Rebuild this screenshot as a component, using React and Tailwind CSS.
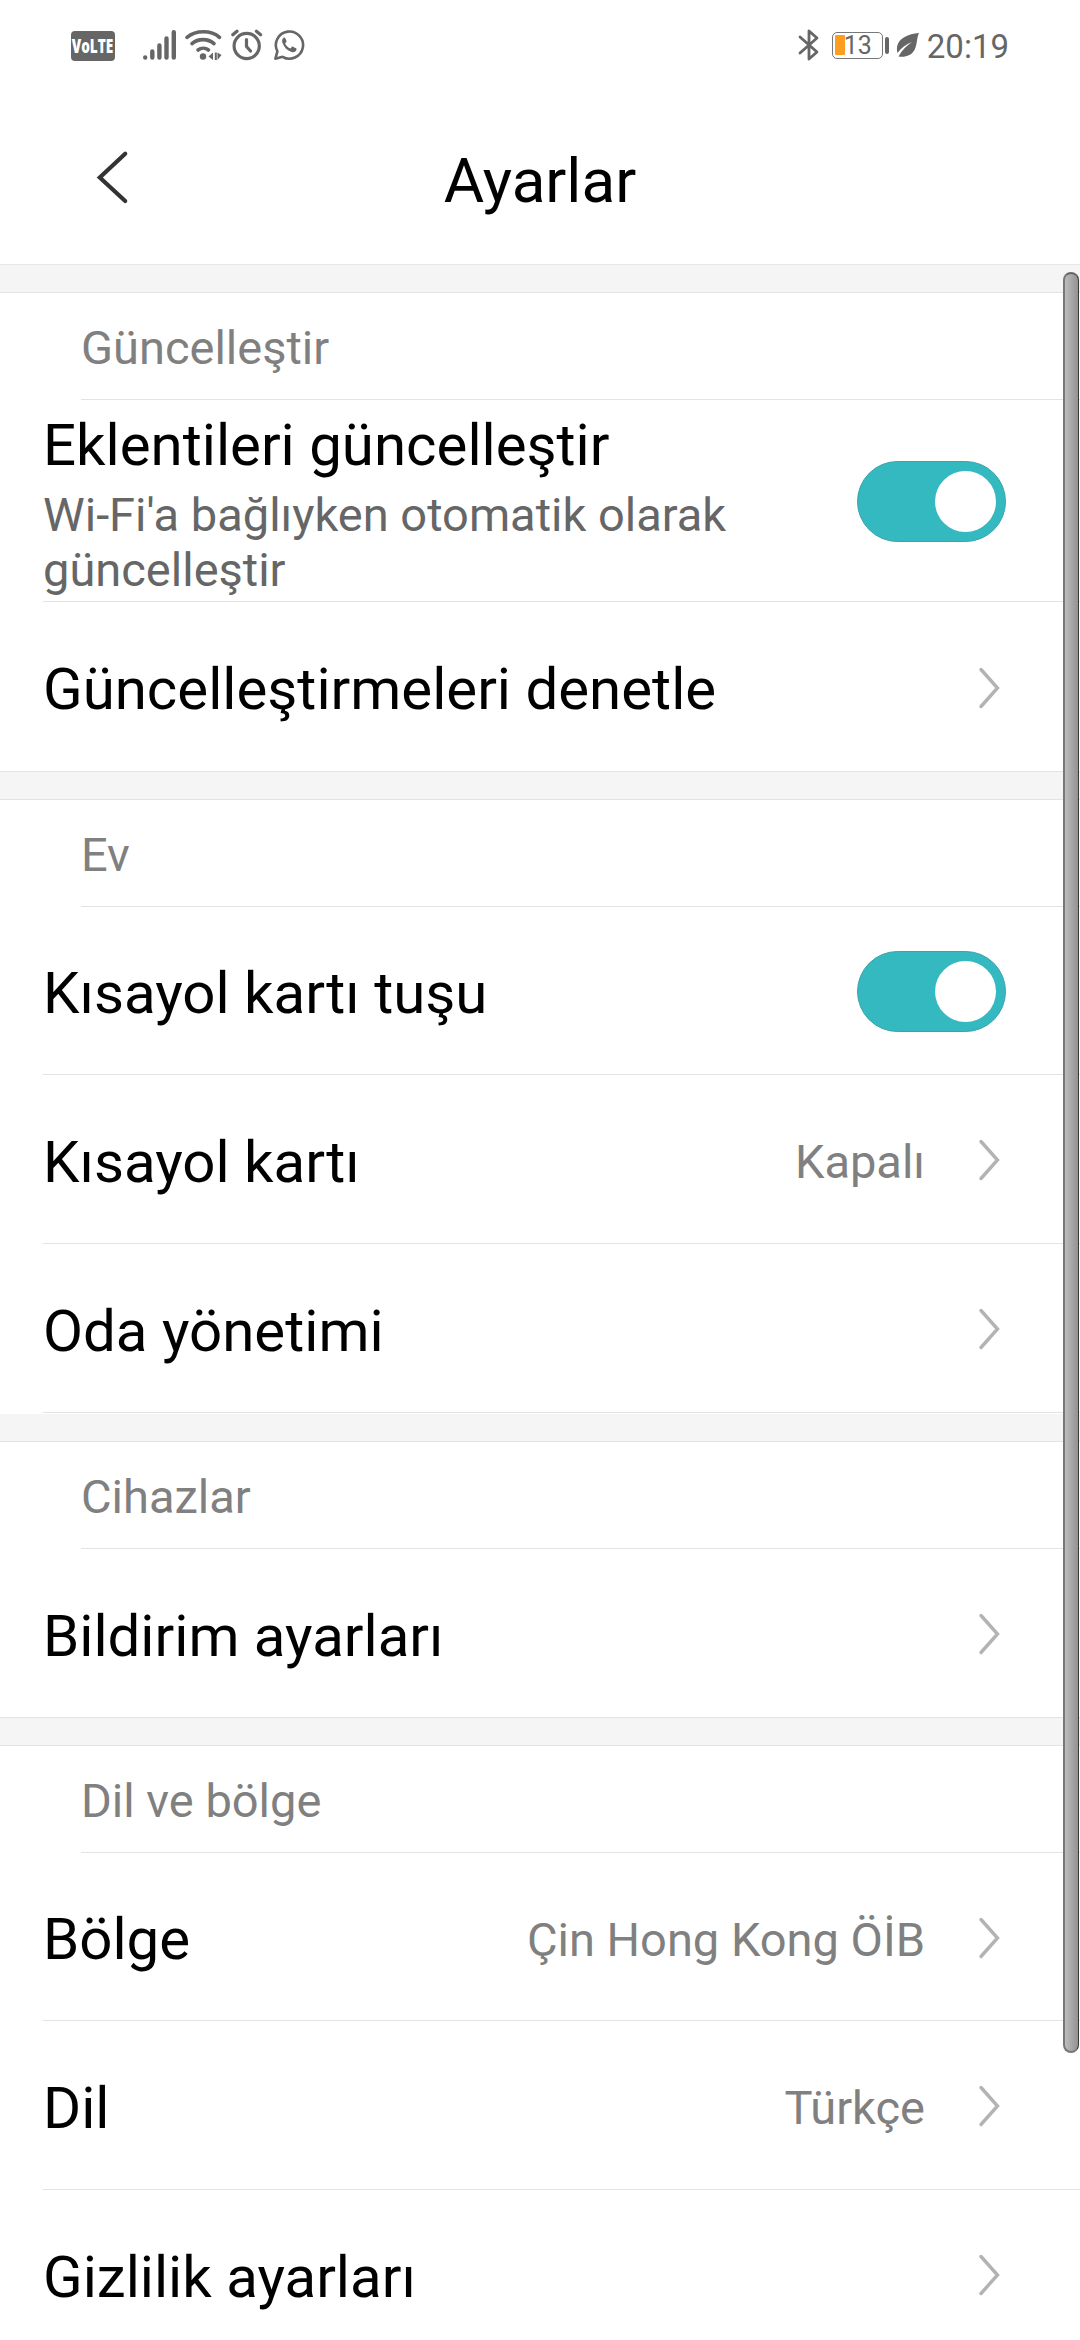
import React, { useState } from 'react';

const SECTIONS = [
  {
    title: 'Güncelleştir',
    rows: [
      {
        id: 'plugins',
        label: 'Eklentileri güncelleştir',
        description: "Wi-Fi'a bağlıyken otomatik olarak güncelleştir",
        toggle: true,
        height: 'h-[201px]',
        divider: true,
      },
      { id: 'check', label: 'Güncelleştirmeleri denetle', height: 'h-[169px]' },
    ],
  },
  {
    title: 'Ev',
    insetEnd: true,
    rows: [
      { id: 'shortcutKey', label: 'Kısayol kartı tuşu', toggle: true, height: 'h-[167px]', divider: true },
      { id: 'shortcut', label: 'Kısayol kartı', value: 'Kapalı', height: 'h-[168px]', divider: true },
      { id: 'rooms', label: 'Oda yönetimi', height: 'h-[168px]', divider: true },
    ],
  },
  {
    title: 'Cihazlar',
    rows: [{ id: 'notifications', label: 'Bildirim ayarları', height: 'h-[168px]' }],
  },
  {
    title: 'Dil ve bölge',
    last: true,
    rows: [
      { id: 'region', label: 'Bölge', value: 'Çin Hong Kong ÖİB', height: 'h-[167px]', divider: true },
      { id: 'language', label: 'Dil', value: 'Türkçe', height: 'h-[168px]', divider: true },
      { id: 'privacy', label: 'Gizlilik ayarları', height: 'h-[168px]' },
    ],
  },
];

function StatusBar() {
  return (
    <div className="flex h-[90px] shrink-0 items-center justify-between pl-[71px] pr-[71px] text-[#666]">
      <div className="flex items-center">
        <span className="mt-[2px] flex h-[30px] w-[44px] items-center justify-center rounded-[4px] bg-[#666] text-white">
          <span className="scale-x-[0.68] font-['Open_Sans'] text-[20px] font-extrabold leading-none">VoLTE</span>
        </span>
        <svg className="ml-[28px] h-[32px] w-[34px]" viewBox="0 0 34 32" stroke="currentColor" strokeWidth="4.400" strokeLinecap="round">
          <path d="M2.200 28.500v.01M9.300 28.500v-6M16.400 28.500v-12M23.500 28.500V9.500M30.800 28.500V3.200" />
        </svg>
        <svg className="ml-[8px] h-[32px] w-[38px]" viewBox="0 0 38 32" fill="none" stroke="currentColor" strokeWidth="3.600" strokeLinecap="round">
          <path d="M2 8.300C11 .9 26 .9 34.500 8.300" />
          <path d="M7 14.600c6-5.300 16-5.300 22 0" />
          <path d="M13 21c3-2.400 7.500-2.400 10.500 0" />
          <circle cx="18" cy="27.500" r="3.200" fill="currentColor" stroke="none" />
          <path d="M28 23.500v7.500l-4.500-3.500zM29.800 23.500h2v7.500h-2zM32.500 23.500v7.500l4-5z" fill="currentColor" stroke="none" />
        </svg>
        <svg className="ml-[8px] h-[32px] w-[32px]" viewBox="0 0 32 32" fill="none" stroke="currentColor" strokeWidth="3.200" strokeLinecap="round" strokeLinejoin="round">
          <circle cx="15.700" cy="17" r="12.600" />
          <path d="M15.500 10.500v7l4 4.500M1.800 5.800l4.200-3.600M29.600 5.800l-4.200-3.600" />
        </svg>
        <svg className="ml-[10px] h-[32px] w-[32px]" viewBox="0 0 32 32" fill="none" stroke="currentColor" strokeWidth="2.600" strokeLinejoin="round">
          <path d="M2.400 29.700l2-7.300A13.600 13.600 0 1 1 9.500 27.800z" />
          <path
            d="M11 8.500c-1.700 1-2.400 3-1.500 5.500 1.700 4.500 4.700 7.500 9 9 2.300.8 4.500-.2 5-2.500.1-.7 0-1-.5-1.300l-3-1.500c-.6-.2-1-.1-1.300.3l-1.200 1.500c-2.500-1-4.200-2.600-5.400-5l1.200-1.600c.3-.4.3-.7.1-1.100L12.200 9c-.3-.5-.7-.8-1.200-.5z"
            fill="currentColor"
            stroke="none"
          />
        </svg>
      </div>

      <div className="flex items-center">
        <svg className="h-[34px] w-[22px]" viewBox="0 0 22 34" fill="none" stroke="currentColor" strokeWidth="2.800" strokeLinecap="round" strokeLinejoin="round">
          <path d="M2 9l17 15-8 7V3l8 7L2 25" />
        </svg>
        <div className="ml-[12px] flex h-[27px] w-[51px] items-center rounded-[5px] border-[1.500px] border-[#777] pl-[2px]">
          <span className="h-[20px] w-[10px] shrink-0 rounded-[1px] bg-[#ff9d1e]" />
          <span className="-ml-px text-[25px] leading-none">13</span>
        </div>
        <span className="ml-[2px] h-[17px] w-[4px] rounded-[2px] bg-[#666]" />
        <svg className="ml-[7px] h-[26px] w-[24px]" viewBox="0 0 24 26">
          <path d="M23 1C12 2 3 6 1.200 14c-.5 2.500-.3 5 .3 7C5 16 10 12.500 16 10 10.500 14 6 18 2.500 24.500c7 1 13-1 16-6.500C21.500 12 20.500 6 23 1z" fill="currentColor" />
        </svg>
        <span className="ml-[7px] mt-[2px] text-[33px] leading-none">20:19</span>
      </div>
    </div>
  );
}

function Header() {
  return (
    <header className="grid h-[174px] shrink-0 grid-cols-[1fr_auto_1fr] items-center">
      <button type="button" className="ml-[96px] h-[54px] w-[34px]">
        <svg className="h-[54px] w-[34px]" viewBox="0 0 34 54" fill="none" stroke="#333" strokeWidth="4.200" strokeLinecap="round">
          <path d="M29.200 3.800L3.800 27.500l25.400 23.500" />
        </svg>
      </button>
      <h1 className="mt-[7px] text-[62px] leading-[72px] text-black">Ayarlar</h1>
    </header>
  );
}

function Chevron() {
  return (
    <svg className="ml-[52px] mr-[79px] mt-[2px] h-[44px] w-[24px] shrink-0" viewBox="0 0 24 44" fill="none" stroke="#b3b3b3" strokeWidth="3.400" strokeLinecap="round">
      <path d="M4 3.500L20.500 22 4 40.500" />
    </svg>
  );
}

function Toggle({ on, onChange }) {
  return (
    <button
      type="button"
      role="switch"
      aria-checked={on}
      onClick={onChange}
      className={`mr-[74px] mt-px flex h-[81px] w-[149px] shrink-0 items-center rounded-full border px-[9px] ${
        on ? 'justify-end border-[#3ba3a9] bg-[#34b9c1]' : 'justify-start border-[#d0d0d0] bg-[#e5e5e5]'
      }`}
    >
      <span className="h-[61px] w-[61px] rounded-full bg-white" />
    </button>
  );
}

function Row({ row, on, onToggle }) {
  return (
    <div className={`ml-[43px] flex items-center justify-between ${row.height} ${row.divider ? 'box-content border-b border-[#e3e3e3]' : ''}`}>
      <div className={row.description ? 'pt-[7px]' : 'pt-[5px]'}>
        <p className="whitespace-nowrap text-[58.2px] leading-[68px] text-black">{row.label}</p>
        {row.description && <p className="mt-[8px] w-[720px] text-[47px] leading-[55px] text-[#666]">{row.description}</p>}
      </div>
      {row.toggle ? (
        <Toggle on={on} onChange={onToggle} />
      ) : (
        <div className="flex items-center">
          {row.value && <span className="whitespace-nowrap pt-[6px] text-[47px] leading-[56px] text-[#808080]">{row.value}</span>}
          <Chevron />
        </div>
      )}
    </div>
  );
}

export default function App() {
  const [toggles, setToggles] = useState({ plugins: true, shortcutKey: true });

  const flip = (id) => setToggles({ ...toggles, [id]: !toggles[id] });

  return (
    <div className="relative flex h-[2340px] w-[1080px] flex-col overflow-hidden bg-white font-['Roboto',sans-serif]">
      <StatusBar />
      <Header />
      <div className="h-[28px] shrink-0 border-t border-[#e8e8e8] bg-[#f5f5f5]" />

      <main>
        {SECTIONS.map((section) => (
          <section key={section.title}>
            <div className="h-[107px] border-t border-[#e3e3e3] pl-[81px]">
              <h2 className="pt-[27px] text-[47px] leading-[56px] text-[#808080]">{section.title}</h2>
            </div>
            <div className="ml-[81px] h-px bg-[#e3e3e3]" />
            {section.rows.map((row) => (
              <Row key={row.id} row={row} on={toggles[row.id]} onToggle={() => flip(row.id)} />
            ))}
            {!section.last && (
              <div className={section.insetEnd ? 'mt-px h-[27px] bg-[#f5f5f5]' : 'h-[28px] border-t border-[#e3e3e3] bg-[#f5f5f5]'} />
            )}
          </section>
        ))}
      </main>

      {/* scroll thumb floats over the list */}
      <div className="absolute right-[1px] top-[272px] h-[1781px] w-[16px] rounded-full border-2 border-r border-b-[#777] border-l-[#777] border-r-[#3a3a3a] border-t-[#666] bg-gradient-to-r from-[#bdbdbd] to-[#929292]" />
    </div>
  );
}
